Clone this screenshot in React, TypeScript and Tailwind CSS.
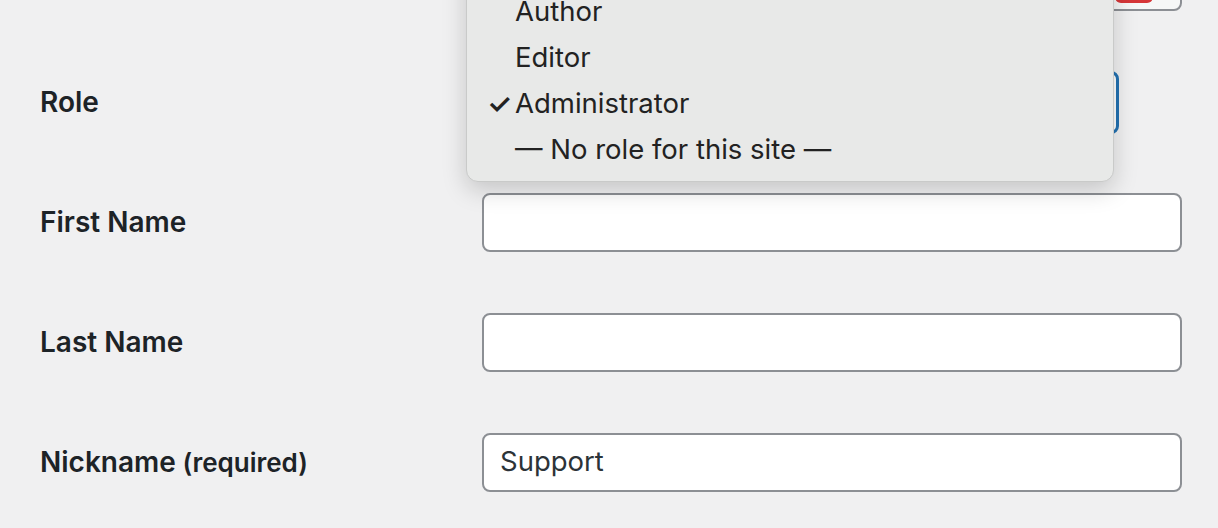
const roles = ["Subscriber", "Contributor", "Author", "Editor", "Administrator", "— No role for this site —"];

const fields = [
  { label: "First Name", value: "" },
  { label: "Last Name", value: "" },
  { label: "Nickname", extra: " (required)", value: "Support" },
];

export default function App() {
  return (
    <div
      className="relative h-[528px] w-full overflow-hidden bg-[#f0f0f1] text-[#1d2327]"
      style={{ fontFamily: "Inter, 'Noto Sans', sans-serif" }}
    >
      {/* row above, mostly scrolled out */}
      <div className="flex h-[42px] items-end">
        <div className="w-[482px] shrink-0" />
        <div className="relative h-[40px] w-[700px] -translate-y-[31px] rounded-lg border-2 border-[#8c8f94] bg-[#f6f7f7]">
          <div className="absolute right-[27px] bottom-[6px] h-[30px] w-[38px] rounded-md bg-[#d63638]" />
        </div>
      </div>

      {/* Role row */}
      <div className="flex h-[120px] items-center">
        <div className="w-[482px] shrink-0 pl-[40px] text-[28px] font-semibold">Role</div>
        <div className="h-[63px] w-[637px] rounded-lg border-[3px] border-[#2271b1] bg-white" />
      </div>

      {fields.map((f) => (
        <div key={f.label} className="flex h-[120px] items-center">
          <div className="w-[482px] shrink-0 pl-[40px] text-[28px] font-semibold">
            {f.label}
            {f.extra && <span className="text-[26px]">{f.extra}</span>}
          </div>
          <div className="flex h-[59px] w-[700px] items-center rounded-lg border-2 border-[#8c8f94] bg-white px-[16px] text-[27.5px] text-[#2c3338]">
            {f.value}
          </div>
        </div>
      ))}

      {/* open select menu */}
      <div className="absolute bottom-[346px] left-[466px] w-[648px] rounded-xl border border-[#c9cac9] bg-[#e8e9e8] pt-[9px] pb-[8px] shadow-[0_8px_24px_rgba(0,0,0,0.18)]">
        {roles.map((r) => (
          <div key={r} className="flex h-[46px] items-center text-[27.5px] text-[#222]">
            <span className="w-[48px] pl-[20px] text-[28px] font-semibold">{r === "Administrator" ? "✓" : ""}</span>
            {r}
          </div>
        ))}
      </div>
    </div>
  );
}
